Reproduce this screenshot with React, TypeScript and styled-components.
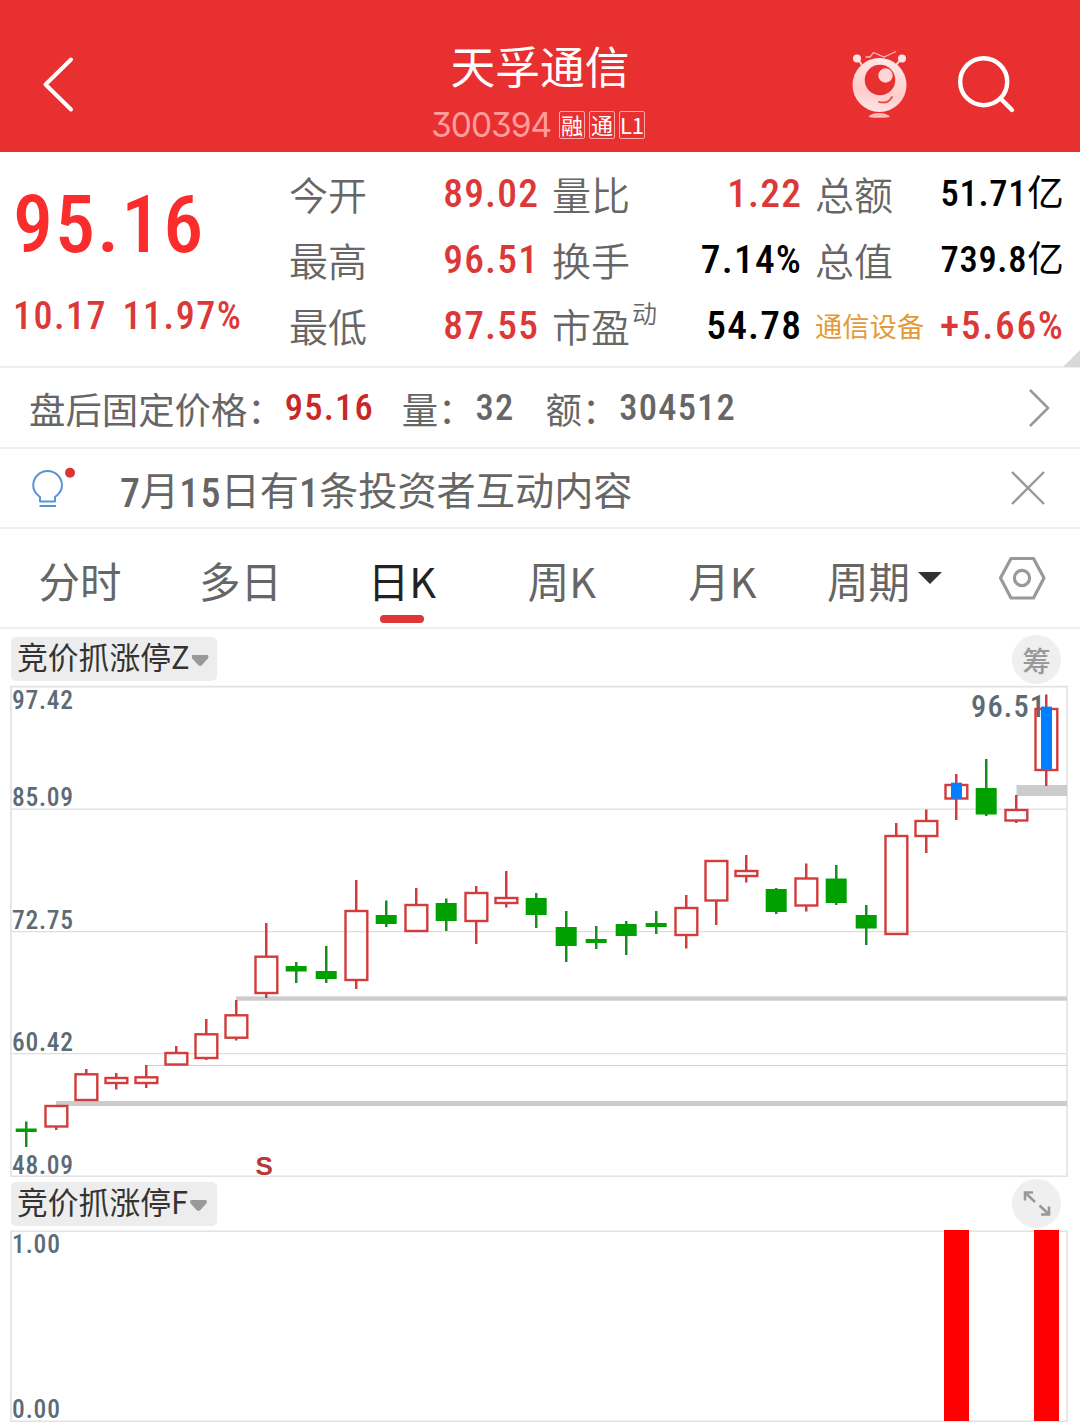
import React from 'react';
import styled, { createGlobalStyle } from 'styled-components';

const CJK = '"Noto Sans CJK SC", sans-serif';
const DIGITS = 'Roboto, "Noto Sans CJK SC", sans-serif';

const GlobalStyle = createGlobalStyle`
  * { box-sizing: border-box; }
  body { margin: 0; background: #fff; }
`;

const Page = styled.main`
  width: 1080px;
  height: 1422px;
  overflow: hidden;
  background: #fff;
  color: #666;
  font-family: ${CJK};
  display: flex;
  flex-direction: column;
`;

const Header = styled.header`
  height: 152px;
  flex: none;
  background: #e83030;
  display: grid;
  grid-template-columns: 404px 268px 1fr;
  color: #fff;
`;

const HeaderSide = styled.div<{ $start: number; $gap?: number }>`
  display: flex;
  align-items: flex-start;
  gap: ${p => p.$gap ?? 0}px;
  padding: 46px 0 0 ${p => p.$start}px;
`;

const Heading = styled.div`
  display: flex;
  flex-direction: column;
  align-items: center;
  padding-top: 37px;
`;

const Title = styled.h1`
  margin: 0;
  padding-left: 4px;
  font-size: 44.8px;
  line-height: 56px;
  font-weight: 400;
`;

const CodeLine = styled.div`
  display: flex;
  align-items: center;
  height: 32px;
  padding-top: 32px;
  gap: 4px;
`;

const Code = styled.span`
  width: 121px;
  font: 400 33.5px/32px Inter, sans-serif;
  letter-spacing: -1px;
  font-feature-settings: "cv09";
  color: #ff9c9c;
  margin-right: 3px;
  white-space: nowrap;
`;

const Tag = styled.span`
  width: 26px;
  height: 28px;
  border: 1px solid #ffaaaa;
  border-radius: 2px;
  font-size: 22px;
  line-height: 25px;
  text-align: center;
  white-space: nowrap;
  display: flex;
  justify-content: center;
`;

const Quote = styled.section`
  height: 216px;
  flex: none;
  display: grid;
  grid-template-columns: 275px 249px 263px 262px;
  padding-left: 14px;
  border-bottom: 2px solid #eee;
  position: relative;
`;

const Num = styled.span<{ $size?: number; $color?: string; $track?: number; $drop?: number }>`
  font-family: ${DIGITS};
  font-size: ${p => p.$size ?? 39.5}px;
  font-weight: 500;
  font-stretch: 87%;
  color: ${p => p.$color ?? '#dc3838'};
  letter-spacing: ${p => p.$track ?? 1.2}px;
  margin-right: -${p => p.$track ?? 1.2}px;
  vertical-align: ${p => (p.$drop ? `-${p.$drop}px` : 'baseline')};
  white-space: pre;
`;

const Unit = styled.span`
  font-weight: 400;
  letter-spacing: 0;
`;

const PriceBlock = styled.div`
  display: flex;
  flex-direction: column;
  line-height: 80px;
  padding-top: 33px;
  margin-left: -1px;
`;

const Change = styled.div`
  display: flex;
  gap: 17px;
  line-height: 40px;
  margin-top: 31px;
`;

const StatColumn = styled.div<{ $inset?: number }>`
  display: grid;
  grid-template-rows: repeat(3, 66px);
  padding: 10px 0 0 ${p => p.$inset ?? 0}px;
`;

const StatRow = styled.div`
  display: flex;
  justify-content: space-between;
  line-height: 64px;
`;

const StatLabel = styled.span`
  font-size: 39px;
  line-height: 62px;
  font-weight: 350;
  white-space: nowrap;
`;

const Superscript = styled.sup`
  font-size: 25px;
  line-height: 1;
  vertical-align: 19px;
  margin-left: 2px;
`;

const Sector = styled.span`
  font-size: 27.3px;
  line-height: 63px;
  color: #e69a37;
`;

const Fold = styled.i`
  position: absolute;
  right: 0;
  bottom: -1px;
  width: 17px;
  height: 17px;
  background: #d8d8d8;
  clip-path: polygon(100% 0, 100% 100%, 0 100%);
`;

const InfoRow = styled.section<{ $height: number }>`
  height: ${p => p.$height}px;
  flex: none;
  display: flex;
  align-items: center;
  border-bottom: 2px solid #f0f0f0;
  padding: 0 30px 0 29px;
`;

const InfoText = styled.span<{ $size: number; $top?: number }>`
  font-size: ${p => p.$size}px;
  line-height: 60px;
  padding-top: ${p => p.$top ?? 0}px;
  white-space: nowrap;
`;

const InfoValue = styled.span<{ $width?: number }>`
  line-height: 60px;
  padding: 5px 0 0 1px;
  width: ${p => (p.$width ? `${p.$width}px` : 'auto')};
`;

const Spacer = styled.div`
  flex: 1;
`;

const NoticeIcon = styled.div`
  width: 91px;
  height: 48px;
`;

const Tabs = styled.nav`
  height: 100px;
  flex: none;
  display: flex;
  border-bottom: 2px solid #f0f0f0;
`;

const Tab = styled.div<{ $active?: boolean; $width: number }>`
  width: ${p => p.$width}px;
  display: flex;
  flex-direction: column;
  align-items: center;
  font-size: 41.5px;
  line-height: 60px;
  padding-top: 21px;
  white-space: nowrap;
  color: ${p => (p.$active ? '#222' : '#666')};
  &::after {
    content: '';
    width: 44px;
    height: 8px;
    margin-top: 5px;
    border-radius: 4px;
    background: ${p => (p.$active ? '#dd3636' : 'transparent')};
  }
`;

const Period = styled.div`
  width: 176px;
  padding: 21px 0 0 23px;
  display: flex;
  align-items: flex-start;
  font-size: 41.5px;
  line-height: 60px;
  gap: 8px;
`;

const PeriodCaret = styled.i`
  width: 24px;
  height: 12px;
  margin-top: 22px;
  flex: none;
  background: #333;
  clip-path: polygon(0 0, 100% 0, 50% 100%);
`;

const ChipCaret = styled.i`
  width: 17px;
  height: 11px;
  margin-top: 18px;
  flex: none;
  background: #999;
  clip-path: polygon(6% 0, 94% 0, 100% 12%, 96% 32%, 60% 94%, 50% 100%, 40% 94%, 4% 32%, 0 12%);
`;

const Settings = styled.div`
  padding: 26px 0 0 17px;
`;

const IndicatorBar = styled.div<{ $height: number; $top: number }>`
  height: ${p => p.$height}px;
  flex: none;
  display: flex;
  justify-content: space-between;
  align-items: flex-start;
  padding: ${p => p.$top}px 19px 0 11px;
`;

const IndicatorChip = styled.div<{ $offset: number }>`
  width: 206px;
  height: 44px;
  margin-top: ${p => p.$offset}px;
  border-radius: 5px;
  background: #ededed;
  color: #333;
  display: flex;
  align-items: flex-start;
  gap: 2px;
  padding-left: 6px;
  font-size: 30.8px;
  line-height: 38px;
  white-space: nowrap;
`;

const RoundButton = styled.div`
  width: 49px;
  height: 49px;
  border-radius: 50%;
  background: #efefef;
  color: #999;
  display: flex;
  align-items: center;
  justify-content: center;
  font-size: 28.5px;
  font-weight: 500;
  line-height: 49px;
`;

const ChartSvg = styled.svg`
  display: block;
  flex: none;
  overflow: visible;
  text {
    font-family: ${DIGITS};
    font-weight: 500;
    font-stretch: 87%;
    fill: #5c6b75;
  }
`;

type Candle = ['r' | 'g', number, number, number, number];

// kind, high, body top, body bottom, low
const candles: Candle[] = [
  ['g', 1121.5, 1128.5, 1132, 1147],
  ['r', 1105, 1105, 1127.5, 1130],
  ['r', 1069, 1073.3, 1101, 1101],
  ['r', 1073, 1077, 1084, 1089.5],
  ['r', 1065, 1076.3, 1084, 1088],
  ['r', 1046, 1052, 1065.5, 1065.5],
  ['r', 1019, 1033.3, 1059, 1060],
  ['r', 1000, 1014.3, 1038.7, 1040.5],
  ['r', 923, 955.7, 994, 998],
  ['g', 962, 966, 971.5, 983],
  ['g', 946, 971, 979, 983],
  ['r', 880, 910, 981, 989],
  ['g', 900.5, 915, 924, 927],
  ['r', 888, 904, 932, 932],
  ['g', 898.5, 903, 921, 931],
  ['r', 886, 892, 922, 944],
  ['r', 871, 897, 904, 907.5],
  ['g', 893, 898, 915, 928],
  ['g', 911, 927, 946, 962],
  ['g', 926, 939, 943, 949],
  ['g', 921, 924, 936, 955],
  ['g', 911, 923, 927, 934],
  ['r', 895, 907, 936, 948.5],
  ['r', 860, 860, 901.5, 925],
  ['r', 855, 870, 877, 882.5],
  ['g', 888, 889, 912, 914],
  ['r', 863.5, 877.5, 906.5, 911.5],
  ['g', 865, 878.5, 903, 905],
  ['g', 905, 915, 928.5, 945],
  ['r', 823, 835, 935, 935],
  ['r', 809.5, 820, 837, 853],
  ['r', 774, 784, 799.5, 820],
  ['g', 759, 788, 814.5, 816],
  ['r', 795, 809, 821.5, 823],
  ['r', 694.5, 708, 771, 786],
];

const RED = '#d23c3c';
const GREEN = '#00a000';

function CandleMark({ candle, x }: { candle: Candle; x: number }) {
  const [kind, high, top, bottom, low] = candle;
  if (kind === 'g') {
    return (
      <g>
        <rect x={x - 1} y={high} width={2.5} height={low - high} fill="#16901a" />
        <rect x={x - 10.3} y={top} width={21} height={bottom - top} fill={GREEN} />
      </g>
    );
  }
  return (
    <g fill={RED}>
      <rect x={x - 1} y={high} width={2.5} height={top - high + 1} />
      <rect x={x - 1} y={bottom - 1} width={2.5} height={low - bottom + 1} />
      <rect x={x - 10.5} y={top + 1} width={21.8} height={bottom - top - 2} fill="none" stroke={RED} strokeWidth={2.4} />
    </g>
  );
}

function MainChart() {
  return (
    <ChartSvg width="1080" height="491" viewBox="0 686 1080 491">
      <g fill="none" stroke="#dedede" strokeWidth="1.2">
        <path d="M11 809.2H1067M11 931.7H1067M11 1053.7H1067" />
        <path d="M11 686.6H1067V1176.2H11Z" stroke="#e2e2e2" strokeWidth="1.6" />
        <path d="M146 1065.5H1067" stroke="#d0d0d0" strokeWidth="1" />
      </g>
      <g fill="#ccc">
        <rect x="1016.5" y="785" width="50.5" height="11" />
        <rect x="236" y="996.4" width="831" height="4.3" />
        <rect x="56" y="1101" width="1011" height="5" />
      </g>
      <text x="12" y="709" fontSize="25.5" textLength="61">97.42</text>
      <text x="12" y="806" fontSize="25.5" textLength="61">85.09</text>
      <text x="12" y="929" fontSize="25.5" textLength="61">72.75</text>
      <text x="12" y="1051" fontSize="25.5" textLength="61">60.42</text>
      <text x="12" y="1174" fontSize="25.5" textLength="61">48.09</text>
      <text x="971" y="717" fontSize="30.5" textLength="74">96.51</text>
      {candles.map((c, i) => <CandleMark key={i} candle={c} x={26 + i * 30} />)}
      <g fill="#0080ff">
        <rect x="951" y="782.7" width="11" height="16" />
        <rect x="1041" y="706.6" width="11" height="63.4" />
      </g>
      <text x="255.5" y="1174.5" fontSize="26" style={{ fontFamily: 'Liberation Sans', fontWeight: 700, fill: '#b83838' }}>S</text>
    </ChartSvg>
  );
}

function SignalChart() {
  return (
    <ChartSvg width="1080" height="192" viewBox="0 1230 1080 192">
      <path d="M11 1231.2H1067V1421.2H11Z" fill="none" stroke="#e2e2e2" strokeWidth="1.6" />
      <g fill="#fe0000">
        <rect x="944" y="1230" width="25" height="191" />
        <rect x="1034" y="1230" width="25" height="191" />
      </g>
      <text x="12" y="1253" fontSize="25.5" textLength="48">1.00</text>
      <text x="12" y="1418" fontSize="25.5" textLength="48">0.00</text>
    </ChartSvg>
  );
}

function BackIcon() {
  return (
    <svg width="40" height="70" viewBox="40 46 40 70" fill="none" stroke="#fff" strokeWidth="4" strokeLinecap="round" strokeLinejoin="round">
      <path d="M71 59.500 45.500 84.500 71 109.500" />
    </svg>
  );
}

function MascotIcon() {
  return (
    <svg width="60" height="76" viewBox="850 46 60 76">
      <defs>
        <linearGradient id="mascot" x1="0.6" y1="0" x2="0.4" y2="1">
          <stop offset="0" stopColor="#ffe9e9" />
          <stop offset="0.65" stopColor="#ffcccc" />
          <stop offset="1" stopColor="#ffe4e4" />
        </linearGradient>
      </defs>
      <path d="M857 58 862 65M902 58 896 65" stroke="#ffd0d0" strokeWidth="2" />
      <circle cx="857" cy="58.500" r="4" fill="#ffe3e3" />
      <circle cx="902" cy="58.500" r="4" fill="#ffe3e3" />
      <path d="M865.500 57H870L873.500 52.500 884 57 896 51.500" fill="none" stroke="#ffb4b4" strokeWidth="1.300" />
      <circle cx="879.500" cy="85" r="27" fill="url(#mascot)" />
      <circle cx="880" cy="80" r="15.300" fill="#e83030" />
      <circle cx="885.500" cy="75.500" r="7.200" fill="#ffd5d5" />
      <path d="M879 101.800Q888 104.500 892 97" fill="none" stroke="#e45050" strokeWidth="1.800" strokeLinecap="round" />
      <path d="M868.500 117Q871 113 879 113T890 117Q879 118.700 868.500 117Z" fill="#ffb9b9" />
    </svg>
  );
}

function SearchIcon() {
  return (
    <svg width="62" height="72" viewBox="955 46 62 72" fill="none" stroke="#fff" strokeWidth="4.400" strokeLinecap="round">
      <circle cx="983.700" cy="81.700" r="23.500" />
      <path d="M1000.500 98.500 1012 110" />
    </svg>
  );
}

function BulbIcon() {
  return (
    <svg width="50" height="48" viewBox="29 464 50 48" fill="none" stroke="#5795d6" strokeWidth="2">
      <path d="M40 501.500V497C36 494 33.200 490 33.200 485.500A14.400 14.400 0 1 1 62 485.500C62 490 59 494 55 497V501.500Z" strokeLinejoin="round" />
      <path d="M39.500 506H56" />
      <circle cx="70" cy="472.700" r="5" fill="#dc3434" stroke="none" />
    </svg>
  );
}

function ExpandIcon() {
  return (
    <svg width="30" height="28" viewBox="0 0 30 28" fill="none" stroke="#999" strokeWidth="2.600">
      <path d="M3 10.500V2.500H11M4 3.500 13 12M27 16.500V24.500H19M26 23.500 17.500 15.500" />
    </svg>
  );
}

function Stat({ label, value, color, unit }: { label: React.ReactNode; value: string; color?: string; unit?: string }) {
  return (
    <StatRow>
      <StatLabel>{label}</StatLabel>
      <Num $size={unit ? 36.5 : 39.5} $color={color} $track={unit ? 0.7 : 1.2}>{value}{unit && <Unit>{unit}</Unit>}</Num>
    </StatRow>
  );
}

const NoticeNum = ({ children }: { children: string }) => (
  <Num $size={40} $color="#666" $drop={2} $track={1.4}>{children}</Num>
);

export default function App() {
  return (
    <Page>
      <GlobalStyle />
      <Header>
        <HeaderSide $start={40}><BackIcon /></HeaderSide>
        <Heading>
          <Title>天孚通信</Title>
          <CodeLine>
            <Code>300394</Code>
            <Tag>融</Tag>
            <Tag>通</Tag>
            <Tag>L1</Tag>
          </CodeLine>
        </Heading>
        <HeaderSide $start={178} $gap={45}><MascotIcon /><SearchIcon /></HeaderSide>
      </Header>

      <Quote>
        <PriceBlock>
          <Num $size={80} $color="#fa2c2c" $track={2}>95.16</Num>
          <Change>
            <Num $size={38} $track={1.5}>10.17</Num>
            <Num $size={38} $track={1.5}>11.97%</Num>
          </Change>
        </PriceBlock>
        <StatColumn>
          <Stat label="今开" value="89.02" />
          <Stat label="最高" value="96.51" />
          <Stat label="最低" value="87.55" />
        </StatColumn>
        <StatColumn $inset={14}>
          <Stat label="量比" value="1.22" />
          <Stat label="换手" value="7.14%" color="#000" />
          <Stat label={<>市盈<Superscript>动</Superscript></>} value="54.78" color="#000" />
        </StatColumn>
        <StatColumn $inset={14}>
          <Stat label="总额" value="51.71" unit="亿" color="#000" />
          <Stat label="总值" value="739.8" unit="亿" color="#000" />
          <StatRow>
            <Sector>通信设备</Sector>
            <Num $track={1.7}>+5.66%</Num>
          </StatRow>
        </StatColumn>
        <Fold />
      </Quote>

      <InfoRow $height={81}>
        <InfoText $size={36.4}>盘后固定价格：</InfoText>
        <InfoValue $width={118}><Num $size={36.5} $color="#c82828">95.16</Num></InfoValue>
        <InfoText $size={36.4}>量：</InfoText>
        <InfoValue $width={71}><Num $size={36.5} $color="#666">32</Num></InfoValue>
        <InfoText $size={36.4}>额：</InfoText>
        <InfoValue><Num $size={36.5} $color="#666">304512</Num></InfoValue>
        <Spacer />
        <svg width="22" height="38" viewBox="0 0 22 38" fill="none" stroke="#999" strokeWidth="2.600"><path d="M2 1 20 19 2 37" /></svg>
      </InfoRow>

      <InfoRow $height={80}>
        <NoticeIcon><BulbIcon /></NoticeIcon>
        <InfoText $size={39.2} $top={5}><NoticeNum>7</NoticeNum>月<NoticeNum>15</NoticeNum>日有<NoticeNum>1</NoticeNum>条投资者互动内容</InfoText>
        <Spacer />
        <svg width="44" height="36" viewBox="0 0 44 36" fill="none" stroke="#999" strokeWidth="2.400"><path d="M6 2 38 34M38 2 6 34" /></svg>
      </InfoRow>

      <Tabs>
        <Tab $width={160}>分时</Tab>
        <Tab $width={161}>多日</Tab>
        <Tab $width={162} $active>日K</Tab>
        <Tab $width={158}>周K</Tab>
        <Tab $width={163}>月K</Tab>
        <Period>周期<PeriodCaret /></Period>
        <Settings>
          <svg width="50" height="46" viewBox="997 555 50 46" fill="none" stroke="#999" strokeWidth="3.200" strokeLinejoin="round">
            <path d="M1011 558.500H1033.500L1044 578 1033.500 598H1011L1000.500 578Z" />
            <circle cx="1022" cy="578" r="7.600" />
          </svg>
        </Settings>
      </Tabs>

      <IndicatorBar $height={57} $top={6}>
        <IndicatorChip $offset={2}>竞价抓涨停Z<ChipCaret /></IndicatorChip>
        <RoundButton>筹</RoundButton>
      </IndicatorBar>
      <MainChart />
      <IndicatorBar $height={53} $top={2}>
        <IndicatorChip $offset={3}>竞价抓涨停F<ChipCaret /></IndicatorChip>
        <RoundButton><ExpandIcon /></RoundButton>
      </IndicatorBar>
      <SignalChart />
    </Page>
  );
}
